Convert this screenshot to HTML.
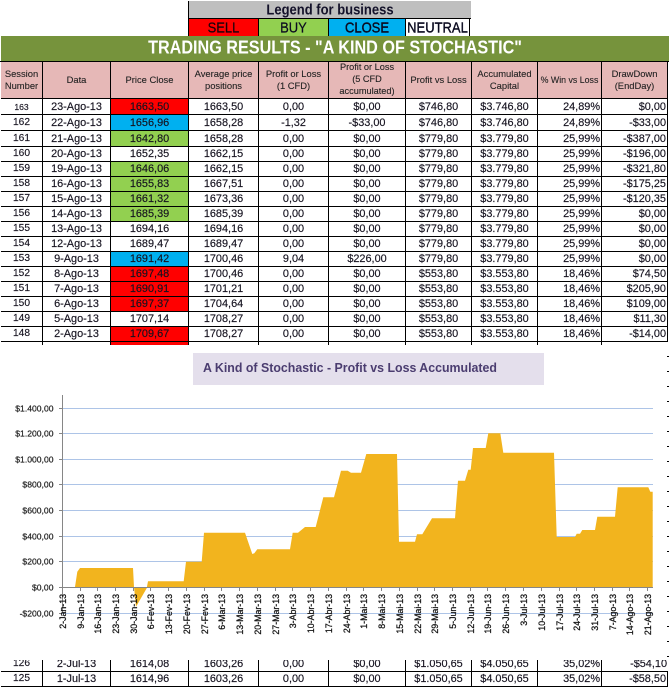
<!DOCTYPE html>
<html><head><meta charset="utf-8"><style>
html,body{margin:0;padding:0;background:#fff}
body{width:669px;height:687px;position:relative;overflow:hidden;font-family:"Liberation Sans",sans-serif;color:#111}
.a{position:absolute}
.lg{position:absolute;top:19px;height:17px;line-height:17px;text-align:center;font-size:13px;color:#0b0b20;box-sizing:border-box;-webkit-text-stroke:.2px #0b0b20}
.lg span,.tall{display:inline-block;transform:scaleY(1.12)}
table{position:absolute;left:1px;border-collapse:separate;border-spacing:0;table-layout:fixed;width:667px}
td{padding:0;border-right:1px solid #000;border-bottom:1px solid #000;box-sizing:border-box;text-align:center;font-size:10.9px;line-height:14px;overflow:hidden;white-space:nowrap;color:#15121f;-webkit-text-stroke:.15px #15121f}
td.r{text-align:right;padding-right:1px}
tr.h td{background:#e6b8b7;font-size:9.4px;line-height:12px;height:37px;white-space:normal;color:#222;-webkit-text-stroke:.1px #222}
tr.h td.t{line-height:11.8px;font-size:9.2px}
tr.s td{height:15px}
tr.l td{height:16px}
tr.e td{height:3px;border-bottom:0;font-size:0;line-height:0}
.R{background:#f00}.G{background:#92d050}.B{background:#00b0f0}
.n{font-size:10.2px}
</style></head><body>
<div class="a" style="left:188px;top:1px;width:1px;height:35px;background:#000"></div>
<div class="a" style="left:189px;top:1px;width:282px;height:17px;background:#bfbfbf;text-align:center;font-weight:bold;font-size:13px;line-height:17px;color:#14122a"><span class="tall">Legend for business</span></div>
<div class="a" style="left:189px;top:18px;width:282px;height:1px;background:#000"></div>
<div class="lg" style="left:189px;width:69px;background:#f00;color:#200"><span>SELL</span></div>
<div class="a" style="left:258px;top:19px;width:1px;height:17px;background:#000"></div>
<div class="lg" style="left:259px;width:69px;background:#92d050"><span>BUY</span></div>
<div class="a" style="left:328px;top:19px;width:1px;height:17px;background:#000"></div>
<div class="lg" style="left:329px;width:76px;background:#00b0f0;-webkit-text-stroke:.35px #0b0b20"><span>CLOSE</span></div>
<div class="a" style="left:405px;top:19px;width:1px;height:17px;background:#000"></div>
<div class="lg" style="left:406px;width:64px;background:#fff;-webkit-text-stroke:.35px #0b0b20;border-right:1px solid #000;"><span>NEUTRAL</span></div>
<div class="a" style="left:1px;top:36px;width:668px;height:25px;background:#76933c;color:#fff;font-weight:bold;font-size:16.2px;line-height:25px;text-align:center;"><span class="tall">TRADING RESULTS - "A KIND OF STOCHASTIC"</span></div>
<div class="a" style="left:0;top:61px;width:669px;height:1px;background:#000"></div>

<table style="top:62px">
<colgroup><col style="width:42px"><col style="width:68px"><col style="width:78px"><col style="width:70px"><col style="width:70px"><col style="width:77px"><col style="width:66px"><col style="width:66px"><col style="width:64px"><col style="width:66px"></colgroup>
<tr class="h"><td>Session Number</td><td>Data</td><td>Price Close</td><td>Average price positions</td><td>Profit or Loss<br>(1 CFD)</td><td class="t">Profit or Loss<br>(5 CFD<br>accumulated)</td><td>Profit vs Loss</td><td>Accumulated Capital</td><td style="font-size:8.8px">% Win vs Loss</td><td>DrawDown<br>(EndDay)</td></tr>
<tr class="l"><td style="font-size:8.6px">163</td><td>23-Ago-13</td><td class="R">1663,50</td><td>1663,50</td><td>0,00</td><td>$0,00</td><td>$746,80</td><td>$3.746,80</td><td class="r">24,89%</td><td class="r">$0,00</td></tr>
<tr class="l"><td class="n">162</td><td>22-Ago-13</td><td class="B">1656,96</td><td>1658,28</td><td>-1,32</td><td>-$33,00</td><td>$746,80</td><td>$3.746,80</td><td class="r">24,89%</td><td class="r">-$33,00</td></tr>
<tr class="l"><td class="n">161</td><td>21-Ago-13</td><td class="G">1642,80</td><td>1658,28</td><td>0,00</td><td>$0,00</td><td>$779,80</td><td>$3.779,80</td><td class="r">25,99%</td><td class="r">-$387,00</td></tr>
<tr class="s"><td class="n">160</td><td>20-Ago-13</td><td>1652,35</td><td>1662,15</td><td>0,00</td><td>$0,00</td><td>$779,80</td><td>$3.779,80</td><td class="r">25,99%</td><td class="r">-$196,00</td></tr>
<tr class="s"><td class="n">159</td><td>19-Ago-13</td><td class="G">1646,06</td><td>1662,15</td><td>0,00</td><td>$0,00</td><td>$779,80</td><td>$3.779,80</td><td class="r">25,99%</td><td class="r">-$321,80</td></tr>
<tr class="s"><td class="n">158</td><td>16-Ago-13</td><td class="G">1655,83</td><td>1667,51</td><td>0,00</td><td>$0,00</td><td>$779,80</td><td>$3.779,80</td><td class="r">25,99%</td><td class="r">-$175,25</td></tr>
<tr class="s"><td class="n">157</td><td>15-Ago-13</td><td class="G">1661,32</td><td>1673,36</td><td>0,00</td><td>$0,00</td><td>$779,80</td><td>$3.779,80</td><td class="r">25,99%</td><td class="r">-$120,35</td></tr>
<tr class="s"><td class="n">156</td><td>14-Ago-13</td><td class="G">1685,39</td><td>1685,39</td><td>0,00</td><td>$0,00</td><td>$779,80</td><td>$3.779,80</td><td class="r">25,99%</td><td class="r">$0,00</td></tr>
<tr class="s"><td class="n">155</td><td>13-Ago-13</td><td>1694,16</td><td>1694,16</td><td>0,00</td><td>$0,00</td><td>$779,80</td><td>$3.779,80</td><td class="r">25,99%</td><td class="r">$0,00</td></tr>
<tr class="s"><td class="n">154</td><td>12-Ago-13</td><td>1689,47</td><td>1689,47</td><td>0,00</td><td>$0,00</td><td>$779,80</td><td>$3.779,80</td><td class="r">25,99%</td><td class="r">$0,00</td></tr>
<tr class="s"><td class="n">153</td><td>9-Ago-13</td><td class="B">1691,42</td><td>1700,46</td><td>9,04</td><td>$226,00</td><td>$779,80</td><td>$3.779,80</td><td class="r">25,99%</td><td class="r">$0,00</td></tr>
<tr class="s"><td class="n">152</td><td>8-Ago-13</td><td class="R">1697,48</td><td>1700,46</td><td>0,00</td><td>$0,00</td><td>$553,80</td><td>$3.553,80</td><td class="r">18,46%</td><td class="r">$74,50</td></tr>
<tr class="s"><td class="n">151</td><td>7-Ago-13</td><td class="R">1690,91</td><td>1701,21</td><td>0,00</td><td>$0,00</td><td>$553,80</td><td>$3.553,80</td><td class="r">18,46%</td><td class="r">$205,90</td></tr>
<tr class="s"><td class="n">150</td><td>6-Ago-13</td><td class="R">1697,37</td><td>1704,64</td><td>0,00</td><td>$0,00</td><td>$553,80</td><td>$3.553,80</td><td class="r">18,46%</td><td class="r">$109,00</td></tr>
<tr class="s"><td class="n">149</td><td>5-Ago-13</td><td>1707,14</td><td>1708,27</td><td>0,00</td><td>$0,00</td><td>$553,80</td><td>$3.553,80</td><td class="r">18,46%</td><td class="r">$11,30</td></tr>
<tr class="s"><td class="n">148</td><td>2-Ago-13</td><td class="R">1709,67</td><td>1708,27</td><td>0,00</td><td>$0,00</td><td>$553,80</td><td>$3.553,80</td><td class="r">18,46%</td><td class="r">-$14,00</td></tr>
<tr class="e"><td></td><td></td><td class="R"></td><td></td><td></td><td></td><td></td><td></td><td></td><td style="border-right:0"></td></tr>
</table>

<svg class="a" style="left:0;top:345px" width="669" height="315" viewBox="0 345 669 315" font-family="Liberation Sans, sans-serif">
<rect x="0" y="345" width="669" height="315" fill="#fff"/>
<rect x="193" y="353" width="351" height="32" fill="#e4dfec"/>
<text x="203" y="372" font-size="13px" font-weight="bold" fill="#4b3d70" textLength="294" lengthAdjust="spacingAndGlyphs">A Kind of Stochastic - Profit vs Loss Accumulated</text>
<g stroke="#adc4e7" stroke-width="1" shape-rendering="crispEdges">
<path d="M62 408.5H653M62 433.5H653M62 459.5H653M62 484.5H653M62 510.5H653M62 536.5H653M62 561.5H653M62 613.5H653"/>
</g>
<path fill="#f2b41e" d="M75 587L77.3 571.7L80 568L133 568L134 587L136 606.7L146.7 588.3L148 581.3L183.7 581.3L186 561.7L201.7 561.7L204 532.7L245 532.7L252.3 554L254.3 553.3L257.3 549.3L290 549.3L292.7 532.7L298 532.7L305 527L315.7 527L323.3 497.3L334 497.3L341 470.7L347.7 470.7L351 472.7L361 472.7L366.3 454L397 454L399 541.7L415 541.7L417 534.3L422.3 534.3L432 518.3L455 518.3L458 480.7L465 480.7L468.3 469.7L470.7 469.7L473 448L485.7 448L488.3 433.3L500.3 433.3L503.3 452.7L554 452.7L556.7 537L575 537L576.7 533.7L580 533.7L582.3 530L595 530L597.3 516.7L615 516.7L617.7 487.3L648.3 487.3L650.3 491.7L652.7 491.7L652.7 587Z"/>
<g stroke="#868686" stroke-width="1" shape-rendering="crispEdges" fill="none">
<path d="M62.5 395V613M59 408.5H62M59 433.5H62M59 459.5H62M59 484.5H62M59 510.5H62M59 536.5H62M59 561.5H62M59 587.5H62M59 613.5H62"/>
<path d="M62 587.5H653"/>
<path d="M62.5 587V591M80.5 587V591M97.5 587V591M115.5 587V591M133.5 587V591M150.5 587V591M168.5 587V591M186.5 587V591M204.5 587V591M221.5 587V591M239.5 587V591M257.5 587V591M275.5 587V591M292.5 587V591M310.5 587V591M328.5 587V591M346.5 587V591M363.5 587V591M381.5 587V591M399.5 587V591M417.5 587V591M434.5 587V591M452.5 587V591M470.5 587V591M487.5 587V591M505.5 587V591M523.5 587V591M541.5 587V591M559.5 587V591M576.5 587V591M594.5 587V591M612.5 587V591M629.5 587V591M647.5 587V591"/>
</g>
<g font-size="8.6px" fill="#222" stroke="#222" stroke-width=".2" text-anchor="end">
<text x="53.5" y="411.5">$1.400,00</text><text x="53.5" y="436.5">$1.200,00</text><text x="53.5" y="462.5">$1.000,00</text><text x="53.5" y="487.5">$800,00</text><text x="53.5" y="513.5">$600,00</text><text x="53.5" y="539.5">$400,00</text><text x="53.5" y="564.5">$200,00</text><text x="53.5" y="590.5">$0,00</text><text x="53.5" y="616.5">-$200,00</text>
</g>
<g font-size="8.8px" fill="#111" stroke="#111" stroke-width=".25" text-anchor="end">
<text transform="translate(66,594) rotate(-90)">2-Jan-13</text>
<text transform="translate(84,594) rotate(-90)">9-Jan-13</text>
<text transform="translate(101,594) rotate(-90)">16-Jan-13</text>
<text transform="translate(119,594) rotate(-90)">23-Jan-13</text>
<text transform="translate(137,594) rotate(-90)">30-Jan-13</text>
<text transform="translate(154,594) rotate(-90)">6-Fev-13</text>
<text transform="translate(172,594) rotate(-90)">13-Fev-13</text>
<text transform="translate(190,594) rotate(-90)">20-Fev-13</text>
<text transform="translate(208,594) rotate(-90)">27-Fev-13</text>
<text transform="translate(225,594) rotate(-90)">6-Mar-13</text>
<text transform="translate(243,594) rotate(-90)">13-Mar-13</text>
<text transform="translate(261,594) rotate(-90)">20-Mar-13</text>
<text transform="translate(279,594) rotate(-90)">27-Mar-13</text>
<text transform="translate(296,594) rotate(-90)">3-Abr-13</text>
<text transform="translate(314,594) rotate(-90)">10-Abr-13</text>
<text transform="translate(332,594) rotate(-90)">17-Abr-13</text>
<text transform="translate(350,594) rotate(-90)">24-Abr-13</text>
<text transform="translate(367,594) rotate(-90)">1-Mai-13</text>
<text transform="translate(385,594) rotate(-90)">8-Mai-13</text>
<text transform="translate(403,594) rotate(-90)">15-Mai-13</text>
<text transform="translate(421,594) rotate(-90)">22-Mai-13</text>
<text transform="translate(438,594) rotate(-90)">29-Mai-13</text>
<text transform="translate(456,594) rotate(-90)">5-Jun-13</text>
<text transform="translate(474,594) rotate(-90)">12-Jun-13</text>
<text transform="translate(491,594) rotate(-90)">19-Jun-13</text>
<text transform="translate(509,594) rotate(-90)">26-Jun-13</text>
<text transform="translate(527,594) rotate(-90)">3-Jul-13</text>
<text transform="translate(545,594) rotate(-90)">10-Jul-13</text>
<text transform="translate(563,594) rotate(-90)">17-Jul-13</text>
<text transform="translate(580,594) rotate(-90)">24-Jul-13</text>
<text transform="translate(598,594) rotate(-90)">31-Jul-13</text>
<text transform="translate(616,594) rotate(-90)">7-Ago-13</text>
<text transform="translate(633,594) rotate(-90)">14-Ago-13</text>
<text transform="translate(651,594) rotate(-90)">21-Ago-13</text>
</g>
<path stroke="#000" stroke-width="1" shape-rendering="crispEdges" d="M667 356.5H669M667 371.5H669M667 386.5H669M667 401.5H669M667 416.5H669M667 431.5H669M667 446.5H669M667 461.5H669M667 476.5H669M667 491.5H669M667 506.5H669M667 521.5H669M667 536.5H669M667 551.5H669M667 566.5H669M667 581.5H669M667 596.5H669M667 611.5H669M667 626.5H669M667 641.5H669M667 656.5H669"/>
</svg>

<div class="a" style="left:0;top:660px;width:669px;height:27px;overflow:hidden">
<table style="top:-3px">
<colgroup><col style="width:42px"><col style="width:68px"><col style="width:78px"><col style="width:70px"><col style="width:70px"><col style="width:77px"><col style="width:66px"><col style="width:66px"><col style="width:64px"><col style="width:66px"></colgroup>
<tr class="s"><td class="n">126</td><td>2-Jul-13</td><td>1614,08</td><td>1603,26</td><td>0,00</td><td>$0,00</td><td>$1.050,65</td><td>$4.050,65</td><td class="r">35,02%</td><td class="r" style="border-right:0">-$54,10</td></tr>
<tr class="s"><td class="n">125</td><td>1-Jul-13</td><td>1614,96</td><td>1603,26</td><td>0,00</td><td>$0,00</td><td>$1.050,65</td><td>$4.050,65</td><td class="r">35,02%</td><td class="r">-$58,50</td></tr>
</table>
</div>
</body></html>
